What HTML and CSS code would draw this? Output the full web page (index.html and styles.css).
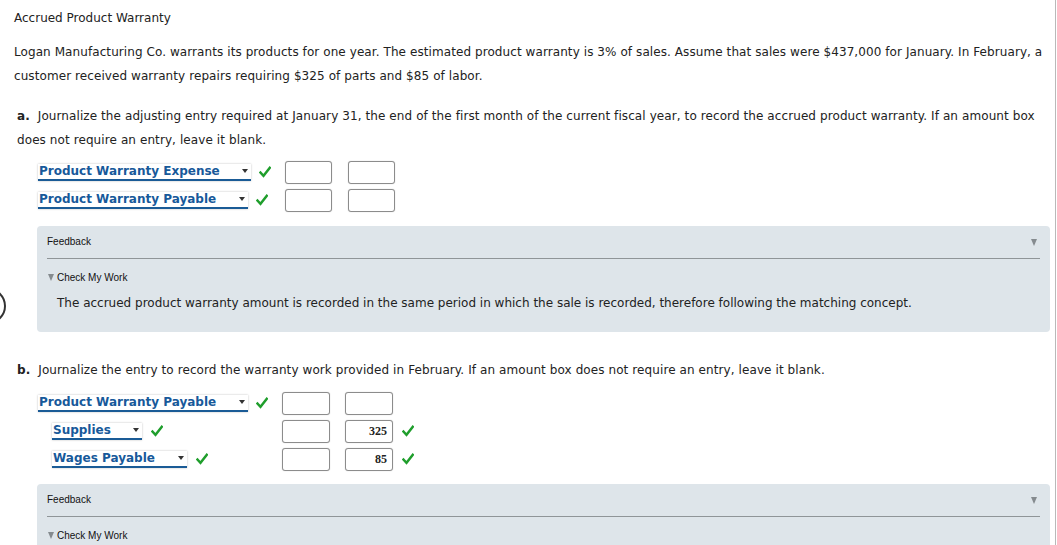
FILE: index.html
```html
<!DOCTYPE html>
<html>
<head>
<meta charset="utf-8">
<link rel="stylesheet" href="styles.css">
</head>
<body>
<div class="frame">
  <div class="ring"></div>
  <h1 class="title">Accrued Product Warranty</h1>
  <p class="intro">Logan Manufacturing Co. warrants its products for one year. The estimated product warranty is 3% of sales. Assume that sales were $437,000 for January. In February, a customer received warranty repairs requiring $325 of parts and $85 of labor.</p>

  <section class="part">
    <p class="prompt"><b class="lbl">a.</b> Journalize the adjusting entry required at January 31, the end of the first month of the current fiscal year, to record the accrued product warranty. If an amount box does not require an entry, leave it blank.</p>
    <div class="journal journal-a">
      <div class="row">
        <div class="acct"><span class="sel w213">Product Warranty Expense<i class="caret"></i></span><svg class="ok" viewBox="0 0 12 12"><path d="M1.5 6.5 L4.5 9.8 L10.8 1.8"/></svg></div>
        <span class="amt"></span><span class="amt"></span>
      </div>
      <div class="row">
        <div class="acct"><span class="sel w210">Product Warranty Payable<i class="caret"></i></span><svg class="ok" viewBox="0 0 12 12"><path d="M1.5 6.5 L4.5 9.8 L10.8 1.8"/></svg></div>
        <span class="amt"></span><span class="amt"></span>
      </div>
    </div>
    <div class="feedback">
      <div class="fb-head">Feedback<i class="fb-tri"></i></div>
      <div class="cmw"><i class="cmw-tri"></i>Check My Work</div>
      <p class="fb-text">The accrued product warranty amount is recorded in the same period in which the sale is recorded, therefore following the matching concept.</p>
    </div>
  </section>

  <section class="part part-b">
    <p class="prompt"><b class="lbl">b.</b> Journalize the entry to record the warranty work provided in February. If an amount box does not require an entry, leave it blank.</p>
    <div class="journal journal-b">
      <div class="row">
        <div class="acct"><span class="sel w210">Product Warranty Payable<i class="caret"></i></span><svg class="ok" viewBox="0 0 12 12"><path d="M1.5 6.5 L4.5 9.8 L10.8 1.8"/></svg></div>
        <span class="amt"></span><span class="amt"></span>
      </div>
      <div class="row">
        <div class="acct indent"><span class="sel w90">Supplies<i class="caret"></i></span><svg class="ok" viewBox="0 0 12 12"><path d="M1.5 6.5 L4.5 9.8 L10.8 1.8"/></svg></div>
        <span class="amt"></span><span class="amt">325</span><svg class="ok" viewBox="0 0 12 12"><path d="M1.5 6.5 L4.5 9.8 L10.8 1.8"/></svg>
      </div>
      <div class="row">
        <div class="acct indent"><span class="sel w135">Wages Payable<i class="caret"></i></span><svg class="ok" viewBox="0 0 12 12"><path d="M1.5 6.5 L4.5 9.8 L10.8 1.8"/></svg></div>
        <span class="amt"></span><span class="amt">85</span><svg class="ok" viewBox="0 0 12 12"><path d="M1.5 6.5 L4.5 9.8 L10.8 1.8"/></svg>
      </div>
    </div>
    <div class="feedback fb-b">
      <div class="fb-head">Feedback<i class="fb-tri"></i></div>
      <div class="cmw"><i class="cmw-tri"></i>Check My Work</div>
    </div>
  </section>
</div>
</body>
</html>
```

FILE: styles.css
```css
* { box-sizing: border-box; }
html, body { margin: 0; padding: 0; background: #fff; overflow: hidden; }
body {
  font-family: "DejaVu Sans", Verdana, sans-serif;
  font-size: 12px;
  color: #222;
}
.frame {
  position: relative;
  width: 1056px;
  height: 545px;
  border-right: 1px solid #b9b9b9;
  padding: 9px 0 0 14px;
  overflow: hidden;
}
.ring {
  position: absolute;
  left: -30px;
  top: 288px;
  width: 36px;
  height: 36px;
  border: 2px solid #333;
  border-radius: 50%;
}
.title {
  margin: 0;
  font-size: 12px;
  font-weight: normal;
  line-height: 18px;
}
.intro {
  margin: 13px 0 0;
  line-height: 24px;
  width: 1036px;
  letter-spacing: 0.08px;
}
.part { margin-top: 16px; padding-left: 3px; }
.part-b { margin-top: 26px; }
.prompt {
  margin: 0;
  line-height: 24px;
  width: 1033px;
  letter-spacing: 0.09px;
}
.lbl { font-weight: bold; display: inline-block; margin-right: 4px; }
.journal { margin-top: 6px; padding-left: 21px; }
.journal-b { margin-top: 7px; }
.row {
  display: grid;
  align-items: center;
  height: 28px;
}
.journal-a .row { grid-template-columns: 231px 47px 47px; column-gap: 16px; }
.journal-b .row { grid-template-columns: 229px 48px 48px 12px; column-gap: 15px; }
.journal-b .row > .ok { margin-left: -6px; }
.acct { display: flex; align-items: center; gap: 8px; }
.acct.indent { padding-left: 14px; gap: 9px; }
.sel {
  position: relative;
  display: inline-block;
  flex: none;
  height: 17px;
  line-height: 15px;
  font-weight: bold;
  color: #17599a;
  background: #fff;
  border-bottom: 2px solid #1a5b96;
  box-shadow: 0 0 2px rgba(0,0,0,0.25);
  padding-left: 1px;
  white-space: nowrap;
}
.w213 { width: 213px; }
.w210 { width: 210px; }
.w90 { width: 90px; }
.w135 { width: 135px; }
.caret {
  position: absolute;
  right: 3px;
  top: 5px;
  width: 0; height: 0;
  border-left: 3.5px solid transparent;
  border-right: 3.5px solid transparent;
  border-top: 4px solid #333;
}
.ok {
  width: 12px;
  height: 12px;
  flex: none;
}
.ok path {
  fill: none;
  stroke: #1f9e2c;
  stroke-width: 2.4;
  stroke-linecap: square;
}
.amt {
  display: block;
  height: 23px;
  border: 1.5px solid #8c8c8c;
  border-radius: 3px;
  background: #fff;
  box-shadow: 0 0 1px rgba(0,0,0,0.3);
  font-family: "Liberation Serif", "Times New Roman", serif;
  font-weight: bold;
  font-size: 12px;
  line-height: 20px;
  text-align: right;
  padding-right: 5px;
  color: #222;
}
.feedback {
  margin-top: 12px;
  margin-left: 20px;
  width: 1013px;
  background: #dee5ea;
  border-radius: 4px;
  padding: 9px 10px 20px 10px;
  font-family: "Liberation Sans", Arial, sans-serif;
}
.fb-b { margin-top: 11px; }
.fb-head {
  position: relative;
  font-size: 10px;
  line-height: 14px;
  padding-bottom: 9px;
  border-bottom: 1px solid #8f9598;
  color: #111;
}
.fb-tri {
  position: absolute;
  right: 3px;
  top: 4px;
  width: 0; height: 0;
  border-left: 3.5px solid transparent;
  border-right: 3.5px solid transparent;
  border-top: 7px solid #858b8f;
}
.cmw {
  margin-top: 12px;
  font-size: 10px;
  line-height: 14px;
  color: #111;
  display: flex;
  align-items: center;
}
.cmw-tri {
  display: inline-block;
  width: 0; height: 0;
  border-left: 3.5px solid transparent;
  border-right: 3.5px solid transparent;
  border-top: 7px solid #858b8f;
  margin: 0 3px 1px 1px;
}
.fb-text {
  margin: 9px 0 0 10px;
  font-family: "DejaVu Sans", Verdana, sans-serif;
  font-size: 12px;
  line-height: 18px;
  color: #222;
}
```
